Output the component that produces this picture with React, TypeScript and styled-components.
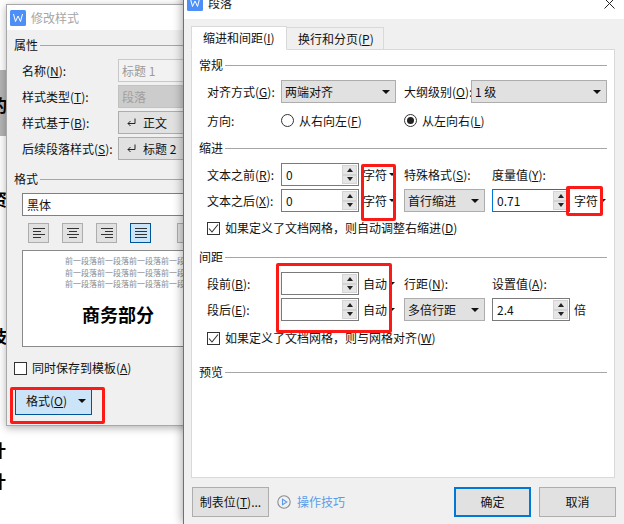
import React from "react";
import styled, { createGlobalStyle } from "styled-components";

const Global = createGlobalStyle`
  html, body { margin: 0; padding: 0; height: 524px; overflow: hidden; background: #fff; }
  body { font-family: "Noto Sans CJK SC", "Liberation Sans", sans-serif; font-size: 12px; line-height: 16px; color: #111; }
`;

const Page = styled.div`
  position: relative;
  width: 624px;
  height: 524px;
  overflow: hidden;
`;

/* document behind the dialogs */
const DocShade = styled.div`
  position: absolute;
  left: 0;
  top: 70px;
  width: 8px;
  height: 66px;
  background: #b4b4b4;
`;
const DocChar = styled.span<{ $top: number; $left: number }>`
  position: absolute;
  left: ${(p) => p.$left}px;
  top: ${(p) => p.$top}px;
  font-size: 17px;
  line-height: 18px;
  font-weight: 700;
  color: #000;
`;

const BackDialog = styled.div`
  position: absolute;
  left: 6px;
  top: 4px;
  width: 190px;
  height: 420px;
  border: 1px solid #a8a8a8;
  background: #f0f0f0;
  box-shadow: 0 2px 8px rgba(0, 0, 0, 0.3);
`;
const MainDialog = styled.div`
  position: absolute;
  left: 183px;
  top: -13px;
  width: 441px;
  height: 537px;
  box-sizing: border-box;
  border-left: 1px solid #707070;
  background: #f0f0f0;
  box-shadow: 0 0 10px rgba(0, 0, 0, 0.4);
`;
const TitleBar = styled.div<{ $h: number; $pad: number }>`
  display: flex;
  align-items: center;
  gap: 5px;
  height: ${(p) => p.$h}px;
  padding-left: ${(p) => p.$pad}px;
  background: #fff;
`;
const TitleText = styled.span<{ $dim?: boolean }>`
  color: ${(p) => (p.$dim ? "#a6a6a6" : "#222")};
  flex: 1;
`;
const CloseBtn = styled.svg`
  width: 11px;
  height: 11px;
  margin-right: 9px;
`;

const BackBody = styled.div`
  padding: 7px 0 0 7px;
`;
const MainBody = styled.div`
  padding: 8px 8px 0 7px;
`;

const Legend = styled.div<{ $mt?: number }>`
  display: flex;
  align-items: center;
  gap: 2px;
  height: 16px;
  margin-top: ${(p) => p.$mt ?? 0}px;
  &::after {
    content: "";
    flex: 1;
    height: 1px;
    background: #a6a6a6;
  }
`;

const Row = styled.div`
  display: grid;
  grid-template-columns: 96px 120px;
  align-items: center;
  margin-left: 8px;
`;
const FormStack = styled.div`
  display: grid;
  gap: 3px;
  margin-top: 6px;
`;
const Label = styled.span`
  white-space: nowrap;
`;
const TextBox = styled.div<{ $disabled?: boolean }>`
  height: 23px;
  box-sizing: border-box;
  display: flex;
  align-items: center;
  padding-left: 3px;
  border: 1px solid ${(p) => (p.$disabled ? "#c8c8c8" : "#7a7a7a")};
  background: ${(p) => (p.$disabled ? "#f2f2f2" : "#fff")};
  color: ${(p) => (p.$disabled ? "#9a9a9a" : "#111")};
`;
const Select = styled.div<{ $disabled?: boolean; $w?: string }>`
  width: ${(p) => p.$w ?? "auto"};
  height: 23px;
  box-sizing: border-box;
  display: flex;
  align-items: center;
  justify-content: space-between;
  gap: 4px;
  padding: 0 5px 0 3px;
  border: 1px solid ${(p) => (p.$disabled ? "#c2c2c2" : "#adadad")};
  background: ${(p) => (p.$disabled ? "#cccccc" : "#e1e1e1")};
  color: ${(p) => (p.$disabled ? "#a0a0a0" : "#111")};
  white-space: nowrap;
`;
const StyleRef = styled.span`
  display: flex;
  align-items: center;
  gap: 7px;
  padding-left: 5px;
`;
const Arrow = styled.i`
  flex: none;
  width: 0;
  height: 0;
  border-left: 4px solid transparent;
  border-right: 4px solid transparent;
  border-top: 4px solid #111;
`;
const TinyArrow = styled.i`
  flex: none;
  width: 0;
  height: 0;
  margin-left: 1px;
  border-left: 3px solid transparent;
  border-right: 3px solid transparent;
  border-top: 3px solid #111;
`;

const FontBox = styled(TextBox)`
  margin: 6px 0 0 8px;
  padding-left: 4px;
  border-color: #808080;
`;
const AlignBar = styled.div`
  display: flex;
  align-items: center;
  gap: 13px;
  margin: 7px 0 0 14px;
`;
const AlignBtn = styled.div<{ $active?: boolean }>`
  width: 21px;
  height: 20px;
  box-sizing: border-box;
  flex: none;
  display: flex;
  align-items: center;
  justify-content: center;
  border: 1px solid ${(p) => (p.$active ? "#005499" : "#adadad")};
  background: ${(p) => (p.$active ? "#cce4f7" : "#e1e1e1")};
`;
const AlignSep = styled.div`
  width: 1px;
  height: 20px;
  background: #c9c4b8;
`;
const Preview = styled.div`
  margin: 7px 0 0 8px;
  height: 97px;
  box-sizing: border-box;
  overflow: hidden;
  border: 1px solid #8a8a8a;
  background: #fff;
  padding: 4px 0 0 42px;
`;
const PreviewLine = styled.div`
  font-size: 8px;
  line-height: 11.5px;
  color: #8c8c8c;
  white-space: nowrap;
`;
const PreviewTitle = styled.div`
  margin: 12px 0 0 17px;
  font-size: 18px;
  line-height: 24px;
  font-weight: 700;
  color: #000;
  white-space: nowrap;
`;

const CheckRow = styled.label<{ $mt: number; $ml?: number }>`
  display: flex;
  align-items: center;
  gap: 5px;
  height: 18px;
  margin: ${(p) => p.$mt}px 0 0 ${(p) => p.$ml ?? 0}px;
  white-space: nowrap;
`;
const CheckBox = styled.span`
  flex: none;
  width: 13px;
  height: 13px;
  box-sizing: border-box;
  display: flex;
  align-items: center;
  justify-content: center;
  border: 1px solid #333;
  background: #fff;
`;

const FormatBtn = styled.div`
  display: flex;
  align-items: center;
  justify-content: space-between;
  width: 77px;
  height: 28px;
  box-sizing: border-box;
  margin: 10px 0 0 1px;
  padding: 0 5px 0 10px;
  border: 1px solid #005499;
  background: #cce4f7;
`;

/* main dialog */
const Tabs = styled.div`
  display: flex;
  align-items: flex-end;
  height: 23px;
  margin-bottom: -1px;
  position: relative;
`;
const Tab = styled.div<{ $active?: boolean }>`
  box-sizing: border-box;
  width: ${(p) => (p.$active ? 96 : 97)}px;
  height: ${(p) => (p.$active ? 24 : 23)}px;
  padding: 3px 0 0 11px;
  border: 1px solid #d9d9d9;
  border-left-width: ${(p) => (p.$active ? 1 : 0)}px;
  border-bottom-color: ${(p) => (p.$active ? "#fff" : "#d9d9d9")};
  background: ${(p) => (p.$active ? "#fff" : "#f0f0f0")};
  white-space: nowrap;
`;
const TabPanel = styled.div`
  box-sizing: border-box;
  width: 424px;
  height: 429px;
  padding: 7px 7px 0 7px;
  border: 1px solid #d9d9d9;
  background: #fff;
`;
const GeneralGrid = styled.div`
  display: grid;
  grid-template-columns: 74px 115px 8px 67px 136px;
  grid-template-rows: 23px 23px;
  row-gap: 6px;
  align-items: center;
  margin: 7px 0 0 8px;
`;
const Cell = styled.div<{ $col: string; $row?: number }>`
  grid-column: ${(p) => p.$col};
  grid-row: ${(p) => p.$row ?? "auto"};
  white-space: nowrap;
`;
const MeasureGrid = styled.div`
  display: grid;
  grid-template-columns: 74px 78px 45px 88px 78px 36px;
  grid-template-rows: 23px 23px;
  row-gap: 3px;
  align-items: center;
  margin: 7px 0 0 8px;
`;
const RadioRow = styled.span`
  display: flex;
  align-items: center;
  gap: 5px;
`;
const Radio = styled.span<{ $on?: boolean }>`
  flex: none;
  width: 13px;
  height: 13px;
  box-sizing: border-box;
  display: flex;
  align-items: center;
  justify-content: center;
  border: 1px solid #333;
  border-radius: 50%;
  &::after {
    content: "";
    width: 7px;
    height: 7px;
    border-radius: 50%;
    background: ${(p) => (p.$on ? "#222" : "transparent")};
  }
`;
const SpinBox = styled.div<{ $focus?: boolean }>`
  width: 78px;
  height: 23px;
  box-sizing: border-box;
  display: flex;
  align-items: center;
  justify-content: space-between;
  padding: 1px 1px 1px 4px;
  border: 1px solid ${(p) => (p.$focus ? "#0078d7" : "#7a7a7a")};
  background: #fff;
`;
const SpinCol = styled.div`
  display: flex;
  flex-direction: column;
  height: 100%;
  width: 15px;
`;
const SpinPart = styled.div<{ $down?: boolean }>`
  flex: 1;
  display: flex;
  align-items: center;
  justify-content: center;
  border: 1px solid #d4d4d4;
  background: #e6e6e6;
  &::after {
    content: "";
    border-left: 3px solid transparent;
    border-right: 3px solid transparent;
    ${(p) => (p.$down ? "border-top: 4px solid #222;" : "border-bottom: 4px solid #222;")}
  }
`;
const Unit = styled.span`
  display: flex;
  align-items: center;
  gap: 1px;
  padding-left: 4px;
  white-space: nowrap;
`;
const Footer = styled.div`
  display: flex;
  align-items: center;
  width: 424px;
  margin: 9px 0 0 1px;
`;
const FootBtn = styled.div<{ $primary?: boolean }>`
  width: 77px;
  height: 30px;
  box-sizing: border-box;
  display: flex;
  align-items: center;
  justify-content: center;
  border: ${(p) => (p.$primary ? "2px solid #0078d7" : "1px solid #adadad")};
  background: #e1e1e1;
  white-space: nowrap;
`;
const FootActions = styled.div`
  display: flex;
  gap: 8px;
  margin-left: auto;
`;
const TipsLink = styled.span`
  display: flex;
  align-items: center;
  gap: 6px;
  margin-left: 8px;
  color: #5c9bea;
`;

const Highlight = styled.div<{ $x: number; $y: number; $w: number; $h: number }>`
  position: absolute;
  left: ${(p) => p.$x}px;
  top: ${(p) => p.$y}px;
  width: ${(p) => p.$w}px;
  height: ${(p) => p.$h}px;
  box-sizing: border-box;
  border: 3px solid #fb1a15;
  border-radius: 2px;
`;

const LogoIcon = () => (
  <svg width="16" height="16" viewBox="0 0 16 16">
    <rect width="16" height="16" rx="1.5" fill="#4d8ff6" />
    <path d="M3.5 4 L5.5 11.5 L8 6 L10.5 11.5 L12.5 4" fill="none" stroke="#fff" strokeWidth="1" />
  </svg>
);
const ReturnIcon = () => (
  <svg width="9" height="9" viewBox="0 0 9 9">
    <path d="M8 0.5 V5.5 H1 M3.5 3 L1 5.5 L3.5 8" fill="none" stroke="#222" strokeWidth="1" />
  </svg>
);
const CheckMark = () => (
  <svg width="11" height="11" viewBox="0 0 11 11">
    <path d="M1 5.5 L4 9 L10 1.5" fill="none" stroke="#333" strokeWidth="1.1" />
  </svg>
);
const AlignIcon = ({ kind }: { kind: "left" | "center" | "right" | "justify" }) => {
  const short = kind === "justify" ? 12 : 8;
  const x = kind === "left" || kind === "justify" ? 0 : kind === "center" ? 2 : 4;
  return (
    <svg width="12" height="10" viewBox="0 0 12 10">
      <path
        d={`M0 .5 H12 M${x} 3.5 H${x + short} M0 6.5 H12 M${x} 9.5 H${x + short}`}
        stroke="#333"
        strokeWidth="1"
      />
    </svg>
  );
};
const PlayIcon = () => (
  <svg width="14" height="14" viewBox="0 0 14 14">
    <circle cx="7" cy="7" r="6.2" fill="none" stroke="#8c8c8c" strokeWidth="1.1" />
    <path d="M5.5 4.2 L9.8 7 L5.5 9.8 Z" fill="none" stroke="#5c9bea" strokeWidth="1.1" />
  </svg>
);

const Spin = ({ value, focus }: { value?: string; focus?: boolean }) => (
  <SpinBox $focus={focus}>
    <span>{value}</span>
    <SpinCol>
      <SpinPart />
      <SpinPart $down />
    </SpinCol>
  </SpinBox>
);

const previewText = "前一段落前一段落前一段落前一段落";

export default function App() {
  return (
    <Page>
      <Global />
      <DocShade />
      <DocChar $left={-10} $top={96}>的</DocChar>
      <DocChar $left={-10} $top={190}>资</DocChar>
      <DocChar $left={-10} $top={327}>技</DocChar>
      <DocChar $left={-11} $top={441}>计</DocChar>
      <DocChar $left={-11} $top={472}>计</DocChar>

      <BackDialog>
        <TitleBar $h={25} $pad={3}>
          <LogoIcon />
          <TitleText $dim>修改样式</TitleText>
        </TitleBar>
        <BackBody>
          <Legend>属性</Legend>
          <FormStack>
            <Row>
              <Label>名称(<u>N</u>):</Label>
              <TextBox $disabled>标题 1</TextBox>
            </Row>
            <Row>
              <Label>样式类型(<u>T</u>):</Label>
              <Select $disabled>段落</Select>
            </Row>
            <Row>
              <Label>样式基于(<u>B</u>):</Label>
              <Select><StyleRef><ReturnIcon />正文</StyleRef></Select>
            </Row>
            <Row>
              <Label>后续段落样式(<u>S</u>):</Label>
              <Select><StyleRef><ReturnIcon />标题 2</StyleRef></Select>
            </Row>
          </FormStack>
          <Legend $mt={11}>格式</Legend>
          <FontBox>黑体</FontBox>
          <AlignBar>
            <AlignBtn><AlignIcon kind="left" /></AlignBtn>
            <AlignBtn><AlignIcon kind="center" /></AlignBtn>
            <AlignBtn><AlignIcon kind="right" /></AlignBtn>
            <AlignBtn $active><AlignIcon kind="justify" /></AlignBtn>
            <AlignSep />
            <AlignBtn />
          </AlignBar>
          <Preview>
            <PreviewLine>{previewText}</PreviewLine>
            <PreviewLine>{previewText}</PreviewLine>
            <PreviewLine>{previewText}</PreviewLine>
            <PreviewTitle>商务部分</PreviewTitle>
          </Preview>
          <CheckRow $mt={12}>
            <CheckBox />
            <span>同时保存到模板(<u>A</u>)</span>
          </CheckRow>
          <FormatBtn>
            <span>格式(<u>O</u>)</span>
            <Arrow />
          </FormatBtn>
        </BackBody>
      </BackDialog>

      <MainDialog>
        <TitleBar $h={32} $pad={3}>
          <LogoIcon />
          <TitleText>段落</TitleText>
          <CloseBtn viewBox="0 0 11 11">
            <path d="M.5 .5 L10.5 10.5 M10.5 .5 L.5 10.5" stroke="#222" strokeWidth="1" />
          </CloseBtn>
        </TitleBar>
        <MainBody>
          <Tabs>
            <Tab $active>缩进和间距(<u>I</u>)</Tab>
            <Tab>换行和分页(<u>P</u>)</Tab>
          </Tabs>
          <TabPanel>
            <Legend>常规</Legend>
            <GeneralGrid>
              <Cell $col="1" $row={1}>对齐方式(<u>G</u>):</Cell>
              <Cell $col="2" $row={1}>
                <Select $w="100%">两端对齐<Arrow /></Select>
              </Cell>
              <Cell $col="4" $row={1}>大纲级别(<u>O</u>):</Cell>
              <Cell $col="5" $row={1}>
                <Select $w="100%">1 级<Arrow /></Select>
              </Cell>
              <Cell $col="1" $row={2}>方向:</Cell>
              <Cell $col="2" $row={2}>
                <RadioRow><Radio /><span>从右向左(<u>F</u>)</span></RadioRow>
              </Cell>
              <Cell $col="4 / 6" $row={2}>
                <RadioRow><Radio $on /><span>从左向右(<u>L</u>)</span></RadioRow>
              </Cell>
            </GeneralGrid>

            <Legend $mt={8}>缩进</Legend>
            <MeasureGrid>
              <Cell $col="1" $row={1}>文本之前(<u>R</u>):</Cell>
              <Cell $col="2" $row={1}><Spin value="0" /></Cell>
              <Cell $col="3" $row={1}><Unit>字符<TinyArrow /></Unit></Cell>
              <Cell $col="4" $row={1}>特殊格式(<u>S</u>):</Cell>
              <Cell $col="5" $row={1}>度量值(<u>Y</u>):</Cell>
              <Cell $col="1" $row={2}>文本之后(<u>X</u>):</Cell>
              <Cell $col="2" $row={2}><Spin value="0" /></Cell>
              <Cell $col="3" $row={2}><Unit>字符<TinyArrow /></Unit></Cell>
              <Cell $col="4" $row={2}>
                <Select $w="81px">首行缩进<Arrow /></Select>
              </Cell>
              <Cell $col="5" $row={2}><Spin value="0.71" focus /></Cell>
              <Cell $col="6" $row={2}><Unit>字符<TinyArrow /></Unit></Cell>
            </MeasureGrid>
            <CheckRow $mt={7} $ml={8}>
              <CheckBox><CheckMark /></CheckBox>
              <span>如果定义了文档网格，则自动调整右缩进(<u>D</u>)</span>
            </CheckRow>

            <Legend $mt={12}>间距</Legend>
            <MeasureGrid>
              <Cell $col="1" $row={1}>段前(<u>B</u>):</Cell>
              <Cell $col="2" $row={1}><Spin /></Cell>
              <Cell $col="3" $row={1}><Unit>自动<TinyArrow /></Unit></Cell>
              <Cell $col="4" $row={1}>行距(<u>N</u>):</Cell>
              <Cell $col="5" $row={1}>设置值(<u>A</u>):</Cell>
              <Cell $col="1" $row={2}>段后(<u>E</u>):</Cell>
              <Cell $col="2" $row={2}><Spin /></Cell>
              <Cell $col="3" $row={2}><Unit>自动<TinyArrow /></Unit></Cell>
              <Cell $col="4" $row={2}>
                <Select $w="81px">多倍行距<Arrow /></Select>
              </Cell>
              <Cell $col="5" $row={2}><Spin value="2.4" /></Cell>
              <Cell $col="6" $row={2}><Unit>倍</Unit></Cell>
            </MeasureGrid>
            <CheckRow $mt={8} $ml={8}>
              <CheckBox><CheckMark /></CheckBox>
              <span>如果定义了文档网格，则与网格对齐(<u>W</u>)</span>
            </CheckRow>

            <Legend $mt={17}>预览</Legend>
          </TabPanel>
          <Footer>
            <FootBtn>制表位(<u>T</u>)...</FootBtn>
            <TipsLink><PlayIcon />操作技巧</TipsLink>
            <FootActions>
              <FootBtn $primary>确定</FootBtn>
              <FootBtn>取消</FootBtn>
            </FootActions>
          </Footer>
        </MainBody>
      </MainDialog>

      <Highlight $x={361} $y={164} $w={35} $h={57} />
      <Highlight $x={566} $y={186} $w={37} $h={30} />
      <Highlight $x={276} $y={263} $w={116} $h={70} />
      <Highlight $x={10} $y={387} $w={95} $h={37} />
    </Page>
  );
}
